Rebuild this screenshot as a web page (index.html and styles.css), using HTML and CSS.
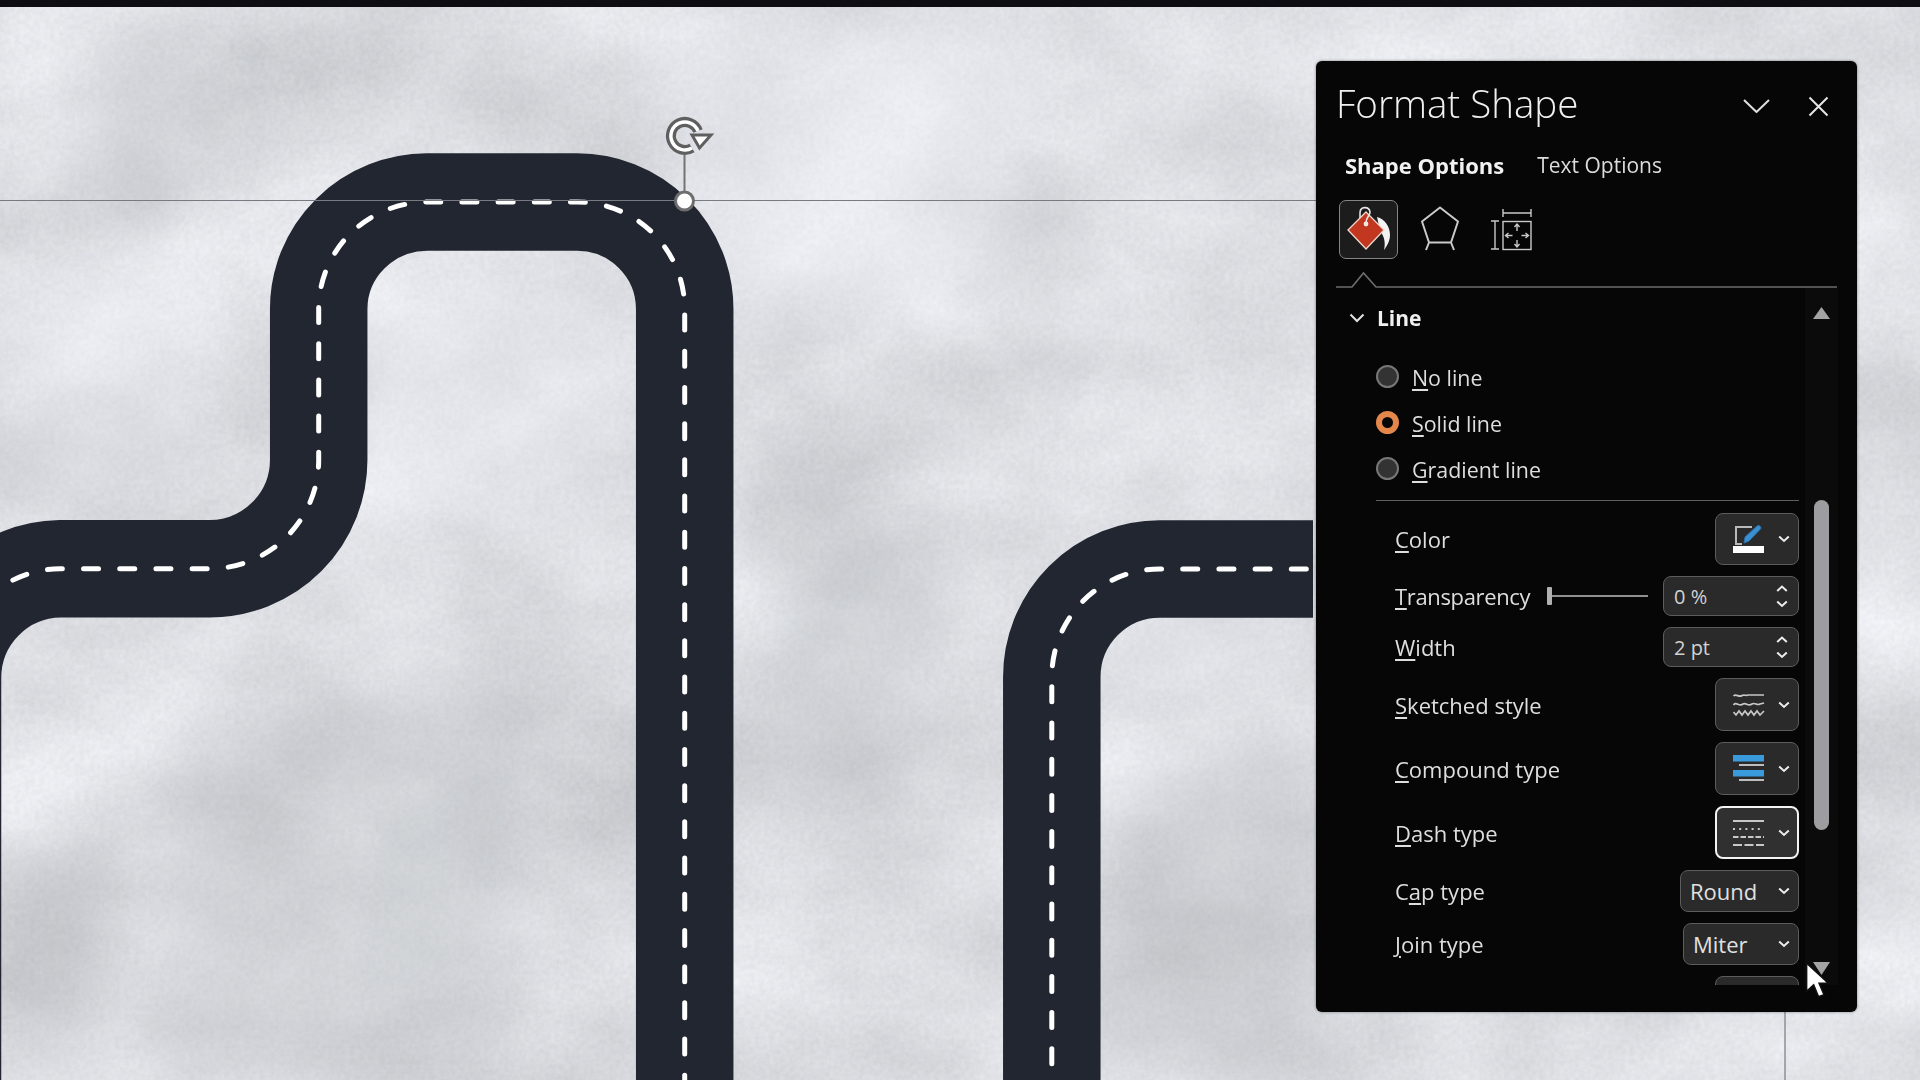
FILE: index.html
```html
<!DOCTYPE html>
<html lang="en">
<head>
<meta charset="utf-8">
<title>Format Shape</title>
<link rel="stylesheet" href="styles.css">
</head>
<body>
<div class="stage">
  <svg class="canvas" viewBox="0 0 1920 1080" width="1920" height="1080" aria-hidden="true">
    <defs>
      <filter id="paper" x="0" y="0" width="100%" height="100%" color-interpolation-filters="sRGB">
        <feTurbulence type="fractalNoise" baseFrequency="0.0042 0.0058" numOctaves="7" seed="11" result="big"/>
        <feColorMatrix in="big" type="matrix" values="0.2 0 0 0 0.765  0.2 0 0 0 0.772  0.2 0 0 0 0.79  0 0 0 0 1" result="bigG"/>
        <feTurbulence type="fractalNoise" baseFrequency="0.2" numOctaves="3" seed="4" result="fine"/>
        <feColorMatrix in="fine" type="matrix" values="1 0 0 0 0  1 0 0 0 0  1 0 0 0 0  0 0 0 0 1" result="fineG"/>
        <feComposite in="bigG" in2="fineG" operator="arithmetic" k1="0" k2="1" k3="0.06" k4="-0.03"/>
      </filter>
      <filter id="soft" x="-30%" y="-30%" width="160%" height="160%"><feGaussianBlur stdDeviation="30"/></filter>
      <filter id="crease" x="-30%" y="-30%" width="160%" height="160%"><feGaussianBlur stdDeviation="7"/></filter>
      <clipPath id="slide"><rect x="0" y="0" width="1313" height="1080"/></clipPath>
    </defs>
    <rect class="paper" x="0" y="0" width="1920" height="1080"/>
    <g class="folds-dark" filter="url(#soft)">
      <path d="M170 740 L540 660 L500 1080 L140 1080 Z"/>
      <path d="M1120 780 L1320 700 L1330 1080 L1060 1080 Z"/>
      <path d="M90 40 L210 60 L180 250 L60 230 Z"/>
      <path d="M780 560 L960 520 L900 800 L760 820 Z"/>
      <path d="M0 860 L120 820 L100 1080 L0 1080 Z"/>
    </g>
    <g class="folds-light" filter="url(#soft)">
      <path d="M640 40 L1040 20 L1010 300 L720 330 Z"/>
      <path d="M340 290 L620 280 L600 500 L370 520 Z"/>
      <path d="M1110 560 L1300 540 L1280 680 L1120 700 Z"/>
      <path d="M0 300 L210 260 L190 480 L0 500 Z"/>
    </g>
    <g class="creases" filter="url(#crease)">
      <path d="M1030 160 L1130 300 L1060 430 L960 290 Z"/>
      <path d="M770 420 L900 560 L800 660 L740 540 Z"/>
      <path d="M380 820 L520 760 L480 960 L360 1000 Z"/>
      <path d="M180 100 L260 40 L280 150 L210 190 Z"/>
    </g>
    <g clip-path="url(#slide)">
      <path class="road" d="M-47.5 1100 V677.7 A109 109 0 0 1 60 568.7 H210 A109 109 0 0 0 318.7 459 V309 A109 107 0 0 1 427 202 H577 A107.7 107 0 0 1 684.7 309 V1100"/>
      <path class="road" d="M1051.8 1100 V677 A108 108 0 0 1 1159.8 569 H1320"/>
      <path class="lane" d="M-47.5 1100 V677.7 A109 109 0 0 1 60 568.7 H210 A109 109 0 0 0 318.7 459 V309 A109 107 0 0 1 427 202 H577 A107.7 107 0 0 1 684.7 309 V1100"/>
      <path class="lane" d="M1051.8 1100 V677 A108 108 0 0 1 1159.8 569 H1320"/>
    </g>
    <line class="guide" x1="0" y1="200.5" x2="1316" y2="200.5"/>
    <line class="guide" x1="1785" y1="1012" x2="1785" y2="1080"/>
    <line class="stem" x1="684.5" y1="155" x2="684.5" y2="192"/>
    <circle class="handle" cx="684.5" cy="201" r="9"/>
    <g class="rotate">
      <path class="rot-out" d="M692 148 A14 14 0 1 1 698 131"/>
      <path class="rot-in" d="M692 148 A14 14 0 1 1 698 131"/>
      <path class="rot-head" d="M692 135 H711 L699.5 148 Z"/>
    </g>
  </svg>

  <div class="topbar"></div>

  <aside class="panel">
    <header class="panel-head">
      <h1 class="panel-title">Format Shape</h1>
      <div class="panel-actions">
        <svg class="head-chevron" viewBox="0 0 27 14"><path d="M1 1 L13.5 13 L26 1"/></svg>
        <svg class="head-close" viewBox="0 0 21 21"><path d="M1.5 1.5 L19.5 19.5 M19.5 1.5 L1.5 19.5"/></svg>
      </div>
    </header>

    <nav class="tabs">
      <span class="tab tab-active">Shape Options</span>
      <span class="tab">Text Options</span>
    </nav>

    <div class="icon-tabs">
      <div class="icon-tab icon-tab-active">
        <svg viewBox="0 0 59 59" width="59" height="59">
          <path class="bucket-drip" d="M38 17 C46 19 51 27 51 35 C51 41 48 46 45 50 C46.5 44 46 37 41 31 Z"/>
          <path class="bucket-body" d="M27 12 L45 30 L27 49 L9 30 Z"/>
          <path class="bucket-loop" d="M21 18 V13 C21 6 30 6 31 12 C31.5 15 27 17 27 23"/>
          <circle class="bucket-dot" cx="27" cy="24" r="2.4"/>
        </svg>
      </div>
      <div class="icon-tab">
        <svg viewBox="0 0 59 59" width="59" height="59">
          <path class="line-icon" d="M30 7.5 L48 21.5 L41 42.5 H19 L12 21.5 Z M19 42.5 L16 50 M41 42.5 L44 50"/>
        </svg>
      </div>
      <div class="icon-tab">
        <svg viewBox="2.5 0 59 59" width="59" height="59">
          <path class="line-icon-thin" d="M24.5 9 V17 M52.5 9 V17 M24.5 13 H52.5 M16.5 21 V49 M12.5 21 H20.5 M12.5 49 H20.5"/>
          <rect class="line-icon-thin" x="24.5" y="21.5" width="28" height="28"/>
          <path class="line-icon-thin" d="M38.5 24 V31 M36 27 L38.5 24 L41 27 M38.5 40 V47 M36 44 L38.5 47 L41 44 M27 35.5 H34 M30 33 L27 35.5 L30 38 M43 35.5 H50 M47 33 L50 35.5 L47 38"/>
        </svg>
      </div>
    </div>

    <svg class="notch" viewBox="0 0 501 16" width="501" height="16"><path d="M0 15 H16 L27.5 1 L40 15 H501"/></svg>

    <div class="panel-body">
      <div class="props">
        <div class="section-head">
          <svg class="section-chevron" viewBox="0 0 16 10"><path d="M1.5 1.5 L8 8 L14.5 1.5"/></svg>
          <span class="section-title">Line</span>
        </div>

        <div class="radios">
          <label class="radio-row"><span class="radio"></span><span class="radio-text"><u>N</u>o line</span></label>
          <label class="radio-row"><span class="radio radio-on"></span><span class="radio-text"><u>S</u>olid line</span></label>
          <label class="radio-row"><span class="radio"></span><span class="radio-text"><u>G</u>radient line</span></label>
        </div>

        <div class="divider"></div>

        <div class="rows">
          <div class="row">
            <span class="row-label"><u>C</u>olor</span>
            <div class="ctl ctl-icon">
              <svg viewBox="0 0 32 30" width="32" height="30">
                <path class="pen-box" d="M19 3 H3 V20 H9"/>
                <rect class="swatch" x="0" y="22" width="31" height="7"/>
                <path class="pen" d="M11 19 L12 13 L24 2 C26 0.5 29 3 27.5 5 L16 17 Z"/>
              </svg>
              <svg class="chev" viewBox="0 0 12 8"><path d="M1.2 1.5 L6 6 L10.8 1.5"/></svg>
            </div>
          </div>

          <div class="row">
            <span class="row-label row-label-fixed"><u>T</u>ransparency</span>
            <div class="slider"><span class="slider-knob"></span><span class="slider-line"></span></div>
            <div class="ctl ctl-spin">
              <span class="spin-value">0 %</span>
              <span class="spin-arrows">
                <svg class="chev" viewBox="0 0 12 8"><path d="M1.2 6 L6 1.5 L10.8 6"/></svg>
                <svg class="chev" viewBox="0 0 12 8"><path d="M1.2 1.5 L6 6 L10.8 1.5"/></svg>
              </span>
            </div>
          </div>

          <div class="row">
            <span class="row-label"><u>W</u>idth</span>
            <div class="ctl ctl-spin">
              <span class="spin-value">2 pt</span>
              <span class="spin-arrows">
                <svg class="chev" viewBox="0 0 12 8"><path d="M1.2 6 L6 1.5 L10.8 6"/></svg>
                <svg class="chev" viewBox="0 0 12 8"><path d="M1.2 1.5 L6 6 L10.8 1.5"/></svg>
              </span>
            </div>
          </div>

          <div class="row">
            <span class="row-label"><u>S</u>ketched style</span>
            <div class="ctl ctl-icon">
              <svg viewBox="0 0 32 30" width="32" height="30">
                <path class="glyph-line" d="M0.5 6 C3 3 6 8 9 5.5 C11 4.5 13 6 15 5 H31"/>
                <path class="glyph-line" d="M0.5 15 C3 11 6 17 10 14 C13 12 15 17 19 14 C22 12 24 16 27 14 L31 13"/>
                <path class="glyph-line" d="M0.5 22 L3 25 L6 21 L9 25 L12 21 L15 25 L18 21 L21 25 L24 21 L27 25 L31 21"/>
              </svg>
              <svg class="chev" viewBox="0 0 12 8"><path d="M1.2 1.5 L6 6 L10.8 1.5"/></svg>
            </div>
          </div>

          <div class="row">
            <span class="row-label"><u>C</u>ompound type</span>
            <div class="ctl ctl-icon">
              <svg viewBox="0 0 32 30" width="32" height="30">
                <rect class="blue" x="0" y="1" width="31" height="6.5"/>
                <rect class="swatch-grey" x="6" y="10" width="25" height="2"/>
                <rect class="blue" x="0" y="16" width="31" height="6.5"/>
                <rect class="swatch-grey" x="6" y="25" width="25" height="2"/>
              </svg>
              <svg class="chev" viewBox="0 0 12 8"><path d="M1.2 1.5 L6 6 L10.8 1.5"/></svg>
            </div>
          </div>

          <div class="row">
            <span class="row-label"><u>D</u>ash type</span>
            <div class="ctl ctl-icon ctl-focus">
              <svg viewBox="0 0 32 30" width="32" height="30">
                <path class="dash-a" d="M0 3 H31"/>
                <path class="dash-b" d="M0 11 H31"/>
                <path class="dash-c" d="M0 19 H31"/>
                <path class="dash-d" d="M0 27 H31"/>
              </svg>
              <svg class="chev" viewBox="0 0 12 8"><path d="M1.2 1.5 L6 6 L10.8 1.5"/></svg>
            </div>
          </div>

          <div class="row">
            <span class="row-label">C<u>a</u>p type</span>
            <div class="ctl ctl-select ctl-cap"><span class="select-value">Round</span><svg class="chev" viewBox="0 0 12 8"><path d="M1.2 1.5 L6 6 L10.8 1.5"/></svg></div>
          </div>

          <div class="row">
            <span class="row-label"><u>J</u>oin type</span>
            <div class="ctl ctl-select ctl-join"><span class="select-value">Miter</span><svg class="chev" viewBox="0 0 12 8"><path d="M1.2 1.5 L6 6 L10.8 1.5"/></svg></div>
          </div>

          <div class="row">
            <span></span>
            <div class="ctl ctl-icon"></div>
          </div>
        </div>
      </div>

      <div class="scrollbar">
        <svg class="scroll-arrow scroll-up" viewBox="0 0 17 12"><path d="M8.5 0 L17 12 H0 Z"/></svg>
        <div class="scroll-thumb"></div>
        <svg class="scroll-arrow scroll-down" viewBox="0 0 17 13"><path d="M0 0 H17 L8.5 13 Z"/></svg>
      </div>
    </div>
  </aside>

  <svg class="cursor" viewBox="0 0 24 34" width="26" height="37"><path d="M1.5 1 V27 L8 21 L12.5 32 L17.5 30 L13 19.5 H21.5 Z"/></svg>
</div>
</body>
</html>
```

FILE: styles.css
```css
* { box-sizing: border-box; }
html, body { margin: 0; padding: 0; background: #dfe1e5; }
.stage {
  position: relative;
  width: 1920px;
  height: 1080px;
  overflow: hidden;
  font-family: "Open Sans", "Noto Sans", sans-serif;
  color: #e2e2e2;
}
.canvas { position: absolute; left: 0; top: 0; display: block; }
.paper { filter: url(#paper); fill: #ddd; }
.folds-dark path { fill: #a9abaf; opacity: .28; }
.folds-light path { fill: #f1f3f7; opacity: .3; }
.creases path { fill: #b4b6ba; opacity: .1; }
.road { fill: none; stroke: #212630; stroke-width: 97.5; }
.lane { fill: none; stroke: #fff; stroke-width: 5; stroke-linecap: round; stroke-dasharray: 15 21.2; }
.guide { stroke: #777a80; stroke-width: 1.2; }
.stem { stroke: #737373; stroke-width: 2; }
.handle { fill: #fff; stroke: #6e6e6e; stroke-width: 3; }
.rot-out { fill: none; stroke: #5f5f5f; stroke-width: 10; }
.rot-in { fill: none; stroke: #fff; stroke-width: 3.5; }
.rot-head { fill: #fff; stroke: #5f5f5f; stroke-width: 3; stroke-linejoin: miter; }

.topbar { position: relative; height: 7px; background: #0e0e10; }

.panel {
  position: absolute;
  left: 1316px;
  top: 61px;
  width: 541px;
  height: 951px;
  padding-left: 20px;
  background: #060607;
  border-radius: 6px;
  box-shadow: 0 0 3px rgba(0, 0, 0, .45);
  display: flex;
  flex-direction: column;
}
.panel-head {
  margin-top: 20px;
  height: 48px;
  display: flex;
  align-items: center;
  justify-content: space-between;
  padding-right: 28px;
}
.panel-title {
  margin: 0 0 4px;
  font-size: 38.5px;
  font-weight: 300;
  line-height: 48px;
  color: #f0f0f0;
}
.panel-actions { display: flex; align-items: center; gap: 38px; margin-top: 2px; }
.head-chevron { width: 27px; height: 14px; fill: none; stroke: #e0e0e0; stroke-width: 2; }
.head-close { width: 21px; height: 21px; fill: none; stroke: #e6e6e6; stroke-width: 2; }

.tabs { margin-top: 15px; margin-bottom: 1px; height: 42px; display: flex; align-items: center; gap: 33px; padding-left: 9px; font-size: 21px; }
.tab { font-weight: 400; color: #dcdcdc; }
.tab-active { font-size: 22px; font-weight: 700; color: #f2f2f2; }

.icon-tabs { margin-top: 13px; margin-left: 3px; height: 59px; display: flex; }
.icon-tab { width: 59px; height: 59px; margin-right: 12px; border-radius: 7px; border: 1.5px solid transparent; }
.icon-tab svg { display: block; margin: -1.5px; }
.icon-tab-active { background: #1c1c1d; border-color: #858585; }
.bucket-body { fill: #c2371f; stroke: #f0d8cc; stroke-width: 1.3; }
.bucket-drip { fill: #f2f2f2; }
.bucket-loop { fill: none; stroke: #e4e4e4; stroke-width: 1.6; }
.bucket-dot { fill: #f6e6df; }
.line-icon { fill: none; stroke: #c9c9c9; stroke-width: 2; stroke-linejoin: round; }
.line-icon-thin { fill: none; stroke: #c9c9c9; stroke-width: 1.4; }

.notch { display: block; margin-top: 13px; fill: none; stroke: #6c6c6c; stroke-width: 1.7; }

.panel-body { display: flex; height: 697px; overflow: hidden; }
.props { width: 469px; flex: none; }
.section-head { margin-top: 15px; height: 30px; display: flex; align-items: center; padding-left: 13px; gap: 12px; }
.section-chevron { width: 16px; height: 10px; fill: none; stroke: #e2e2e2; stroke-width: 2; }
.section-title { font-size: 21px; font-weight: 700; color: #f0f0f0; }

.radios { margin: 22px 0 0 40px; }
.radio-row { height: 46px; display: flex; align-items: center; }
.radio {
  width: 23px;
  height: 23px;
  border-radius: 50%;
  background: #333;
  border: 2.5px solid #777;
  margin-top: -4px;
  margin-right: 13px;
  flex: none;
}
.radio-on { background: #060607; border: 6px solid #e5874a; }
.radio-text { font-size: 21.4px; font-weight: 400; color: #dedede; margin-top: -1px; }
u { text-decoration-thickness: 1.5px; text-underline-offset: 3px; }

.divider { margin: 7px 0 0 40px; width: 423px; height: 1px; background: #5f5f5f; }

.rows { margin: 12px 0 0 40px; width: 423px; display: grid; grid-template-rows: 52px 40px 40px 53px 53px 53px 42px 42px 52px; row-gap: 11px; }
.row { display: flex; align-items: center; justify-content: space-between; padding-left: 19px; }
.row-label { font-size: 22px; color: #dedede; }
.row-label-fixed { width: 150px; flex: none; letter-spacing: -.35px; }

.ctl {
  display: flex;
  align-items: center;
  height: 100%;
  background: #2a2a2b;
  border: 1.5px solid #5c5c5c;
  border-radius: 8px;
  position: relative;
}
.ctl-icon { width: 84px; padding-left: 17px; gap: 12.5px; }
.ctl-focus { border: 2.5px solid #f3f3f3; padding-left: 16px; background: #303031; }
.chev { width: 12px; height: 8px; fill: none; stroke: #ececec; stroke-width: 2; flex: none; }
.ctl-spin { width: 136px; padding-left: 10px; justify-content: space-between; padding-right: 10px; }
.spin-value { font-size: 20px; color: #d2d2d2; }
.spin-arrows { display: flex; flex-direction: column; gap: 7px; }
.spin-arrows svg { display: block; }
.slider { width: 101px; height: 18px; display: flex; align-items: center; margin-left: -2px; margin-right: 12px; flex: none; }
.slider-knob { width: 5px; height: 18px; background: #b0b0b0; border-radius: 1px; flex: none; }
.slider-line { flex: 1; height: 2px; background: #8f8f8f; }
.ctl-select { justify-content: space-between; padding: 0 8px 0 9px; }
.ctl-cap { width: 119px; }
.ctl-join { width: 116px; }
.select-value { font-size: 22px; color: #e0e0e0; }
.pen-box { fill: none; stroke: #b9b9b9; stroke-width: 2; }
.swatch { fill: #fff; }
.pen { fill: #3a8fd0; stroke: #2a6fa6; stroke-width: 1; }
.glyph-line { fill: none; stroke: #c6c6c6; stroke-width: 1.7; }
.blue { fill: #3a9bdc; }
.swatch-grey { fill: #bdbdbd; }
.dash-a, .dash-b, .dash-c, .dash-d { fill: none; stroke: #c8c8c8; stroke-width: 2; }
.dash-b { stroke-dasharray: 2 4.2; }
.dash-c { stroke-dasharray: 5.5 2; }
.dash-d { stroke-dasharray: 9 2.5; }

.scrollbar {
  width: 33px;
  flex: none;
  background: #0b0b0c;
  display: flex;
  flex-direction: column;
  align-items: center;
  padding-top: 19px;
}
.scroll-arrow { display: block; fill: #a3a3a3; flex: none; }
.scroll-up { width: 17px; height: 12px; }
.scroll-thumb { width: 15px; height: 330px; margin-top: 181px; border-radius: 8px; background: #9d9d9f; flex: none; }
.scroll-down { width: 17px; height: 13px; margin-top: 132px; }

.cursor { position: absolute; left: 1805px; top: 962px; fill: #fff; stroke: #111; stroke-width: 1.4; }
```
